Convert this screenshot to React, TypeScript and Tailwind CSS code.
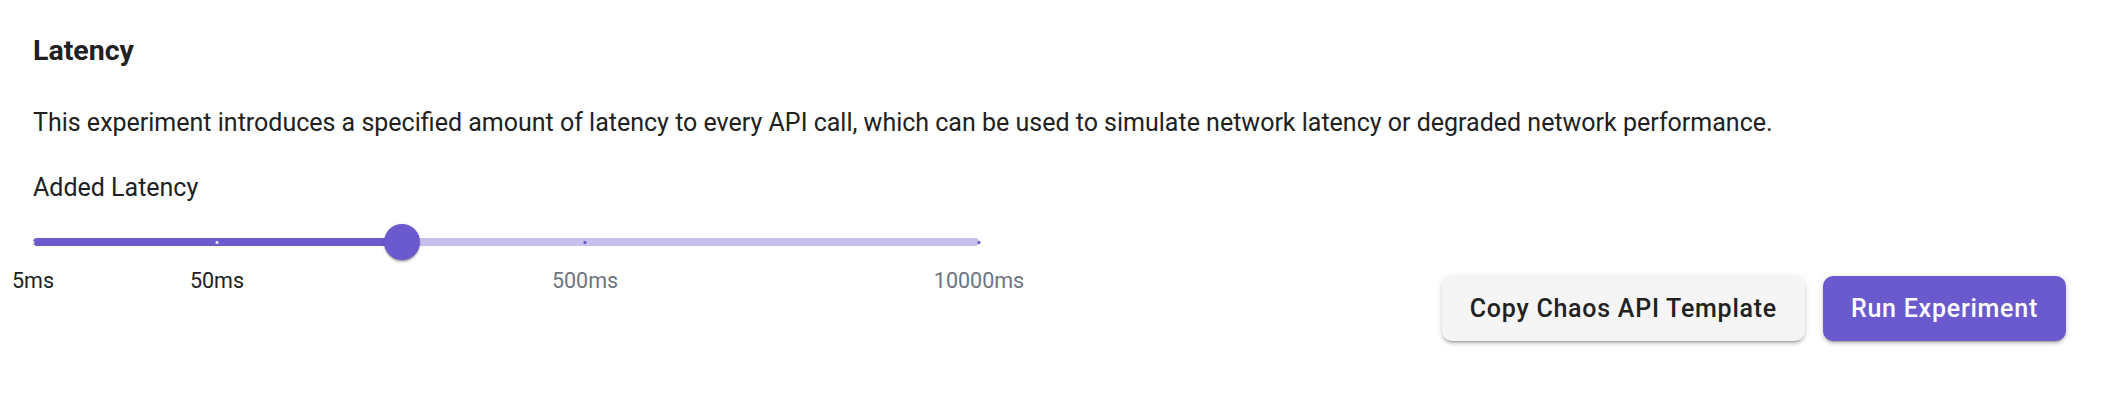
import React from 'react';

type Mark = { label: string; pos: number; active: boolean };

const marks: Mark[] = [
  { label: '5ms', pos: 0, active: true },
  { label: '50ms', pos: 19.45, active: true },
  { label: '500ms', pos: 58.35, active: false },
  { label: '10000ms', pos: 100, active: false },
];

const thumbPos = 39;

function LatencySlider() {
  return (
    <div className="flex w-[946px] flex-col">
      <div className="text-[25px] leading-[32px] text-[#212121]">Added Latency</div>

      {/* rail + track, thumb sits over it */}
      <div className="relative mt-[20px] flex h-[36px] items-center">
        <div className="flex h-[8px] w-full overflow-hidden rounded-full bg-[#c6c0ec]">
          <div className="h-full rounded-full bg-[#6a5acd]" style={{ width: `${thumbPos}%` }} />
        </div>
        {marks.map((m) => (
          <span
            key={m.label}
            className={`absolute h-[3px] w-[3px] -translate-x-1/2 rounded-[1px] ${
              m.active ? 'bg-white/80' : 'bg-[#6a5acd]'
            }`}
            style={{ left: `${m.pos}%` }}
          />
        ))}
        <div
          className="absolute h-[36px] w-[36px] -translate-x-1/2 rounded-full bg-[#6a5acd] shadow-[0_3px_2px_-1px_rgba(0,0,0,0.2),0_1px_1px_0_rgba(0,0,0,0.14),0_1px_4px_0_rgba(0,0,0,0.12)]"
          style={{ left: `${thumbPos}%` }}
        />
      </div>

      {/* mark labels, centred under their ticks */}
      <div className="relative mt-[7px] h-[28px]">
        {marks.map((m) => (
          <span
            key={m.label}
            className={`absolute -translate-x-1/2 whitespace-nowrap text-[21.5px] leading-[28px] ${
              m.active ? 'text-[#212121]' : 'text-[#6e7480]'
            }`}
            style={{ left: `${m.pos}%` }}
          >
            {m.label}
          </span>
        ))}
      </div>
    </div>
  );
}

const btn =
  'h-[65px] rounded-[10px] px-[28px] text-[25px] font-medium tracking-[0.03em] shadow-[0_4px_1px_-3px_rgba(0,0,0,0.2),0_3px_3px_0_rgba(0,0,0,0.14),0_1px_7px_0_rgba(0,0,0,0.12)]';

export default function App() {
  return (
    <div className="min-h-screen bg-white font-['Roboto',sans-serif] antialiased">
      <div className="flex flex-col pl-[33px] pr-[43px] pt-[35px]">
        <h2 className="text-[28.5px] leading-[32px] font-bold text-[#212121]">Latency</h2>
        <p className="mt-[40px] text-[25px] leading-[32px] text-[#212121]">
          This experiment introduces a specified amount of latency to every API call, which can be used to simulate
          network latency or degraded network performance.
        </p>

        <div className="mt-[33px] flex items-start justify-between">
          <LatencySlider />

          <div className="mt-[104px] flex gap-[18px]">
            <button className={`${btn} bg-[#f5f5f5] text-[#212121]`}>Copy Chaos API Template</button>
            <button className={`${btn} bg-[#6a5acd] text-white`}>Run Experiment</button>
          </div>
        </div>
      </div>
    </div>
  );
}
